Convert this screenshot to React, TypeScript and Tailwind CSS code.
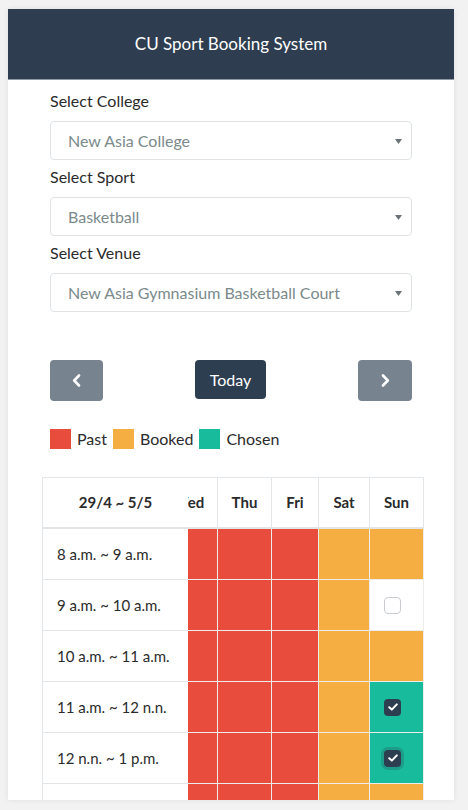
import React from "react";

// ---- Colours (Flatly-ish palette) ----
// past: red, booked: orange, chosen: teal, free: white

type Slot = "past" | "booked" | "free" | "chosen";

// Only the tail of the week is in view; Wed is half hidden behind the time column.
const DAYS: { name: string; width: string }[] = [
  { name: "Wed", width: "w-[58px]" },
  { name: "Thu", width: "w-[54px]" },
  { name: "Fri", width: "w-[47px]" },
  { name: "Sat", width: "w-[51px]" },
  { name: "Sun", width: "w-[54px]" },
];

const ROWS: { label: string; slots: Slot[]; focus?: boolean }[] = [
  { label: "8 a.m. ~ 9 a.m.", slots: ["past", "past", "past", "booked", "booked"] },
  { label: "9 a.m. ~ 10 a.m.", slots: ["past", "past", "past", "booked", "free"] },
  { label: "10 a.m. ~ 11 a.m.", slots: ["past", "past", "past", "booked", "booked"] },
  { label: "11 a.m. ~ 12 n.n.", slots: ["past", "past", "past", "booked", "chosen"] },
  { label: "12 n.n. ~ 1 p.m.", slots: ["past", "past", "past", "booked", "chosen"], focus: true },
  { label: "1 p.m. ~ 2 p.m.", slots: ["past", "past", "past", "booked", "booked"] },
];

const slotBg: Record<Slot, string> = {
  past: "bg-[#e74c3c]",
  booked: "bg-[#f5ae41]",
  free: "bg-white",
  chosen: "bg-[#18bc9c]",
};

function Select({ value }: { value: string }) {
  return (
    <div className="relative flex h-[39px] items-center rounded-[4px] border border-[#dfe3e6] bg-white pl-[17px] text-[16px] text-[#7b8a8b]">
      {value}
      <svg className="absolute right-[9px] top-[17px]" width="7" height="5" viewBox="0 0 7 5">
        <path d="M0 0 H7 L3.5 5 Z" fill="#6b7378" />
      </svg>
    </div>
  );
}

function Field({ label, value }: { label: string; value: string }) {
  return (
    <div className="mb-[6px]">
      <div className="mb-[9px] h-[22px] text-[16px] leading-[22px] text-[#2b2b2b]">{label}</div>
      <Select value={value} />
    </div>
  );
}

function Check({ checked, focus }: { checked: boolean; focus?: boolean }) {
  if (!checked) {
    return <div className="mr-[8px] h-[17px] w-[17px] rounded-[4px] border border-[#c9cdd1] bg-white" />;
  }
  return (
    <div
      className={
        "mr-[8px] flex h-[17px] w-[17px] items-center justify-center rounded-[4px] bg-[#2c3e50]" +
        (focus ? " shadow-[0_0_0_3px_rgba(44,62,80,0.25)]" : "")
      }
    >
      <svg width="10" height="8" viewBox="0 0 10 8">
        <path d="M1.2 4.2 L3.8 6.6 L8.8 1.4" fill="none" stroke="white" strokeWidth="2" strokeLinecap="round" strokeLinejoin="round" />
      </svg>
    </div>
  );
}

function Chevron({ dir }: { dir: "left" | "right" }) {
  return (
    <svg width="9" height="13" viewBox="0 0 9 13">
      <path
        d={dir === "left" ? "M7 1.5 L2.2 6.5 L7 11.5" : "M2 1.5 L6.8 6.5 L2 11.5"}
        fill="none"
        stroke="white"
        strokeWidth="2.6"
        strokeLinecap="round"
        strokeLinejoin="round"
      />
    </svg>
  );
}

function Legend({ color, label }: { color: string; label: string }) {
  return (
    <div className="mr-[6px] flex items-center">
      <div className={"mr-[6px] h-5 w-[21px] " + color} />
      <span className="text-[16px] leading-5 text-[#2b2b2b]">{label}</span>
    </div>
  );
}

function Timetable() {
  return (
    <div className="ml-[34px] flex w-[382px] border-l border-t border-[#e3e6e8]">
      {/* fixed time column */}
      <div className="w-[145px] shrink-0">
        <div className="flex h-[51px] items-center justify-center border-b-2 border-[#e3e6e8] text-[15px] font-bold text-[#2b2b2b]">
          29/4 ~ 5/5
        </div>
        {ROWS.map((row) => (
          <div key={row.label} className="flex h-[51px] items-center border-b border-[#e3e6e8] pl-[14px] text-[15px] text-[#2b2b2b]">
            {row.label}
          </div>
        ))}
      </div>

      {/* day columns, scrolled to the end of the week */}
      <div className="flex flex-1 justify-end overflow-hidden">
        <div className="shrink-0">
          <div className="flex">
            {DAYS.map((d) => (
              <div
                key={d.name}
                className={"flex h-[51px] shrink-0 items-center justify-center border-b-2 border-r border-[#e3e6e8] text-[15px] font-bold text-[#2b2b2b] " + d.width}
              >
                {d.name}
              </div>
            ))}
          </div>
          {ROWS.map((row) => (
            <div key={row.label} className="flex">
              {row.slots.map((s, i) => (
                <div
                  key={i}
                  className={"flex h-[51px] shrink-0 items-center justify-center border-b border-r border-[#ececec] " + DAYS[i].width + " " + slotBg[s]}
                >
                  {s === "free" && <Check checked={false} />}
                  {s === "chosen" && <Check checked focus={row.focus} />}
                </div>
              ))}
            </div>
          ))}
        </div>
      </div>
    </div>
  );
}

export default function App() {
  return (
    <div className="min-h-[810px] bg-[#f2f2f2] pl-[8px] pt-[9px] font-['Lato','Liberation_Sans',sans-serif]">
      <div className="h-[791px] w-[446px] overflow-hidden bg-white shadow-[0_0_6px_rgba(0,0,0,0.08)]">
        <div className="flex h-[71px] items-center justify-center border-b border-[#8e99a3] bg-[#2e3e50] text-[17px] text-white">
          CU Sport Booking System
        </div>

        <div className="px-[42px] pt-[10px]">
          <Field label="Select College" value="New Asia College" />
          <Field label="Select Sport" value="Basketball" />
          <Field label="Select Venue" value="New Asia Gymnasium Basketball Court" />

          <div className="mt-[48px] flex items-start justify-between">
            <button className="flex h-[41px] w-[53px] items-center justify-center rounded-[4px] bg-[#77838f]">
              <Chevron dir="left" />
            </button>
            <button className="h-[39px] w-[71px] rounded-[4px] bg-[#2c3e50] text-[16px] text-white">Today</button>
            <button className="flex h-[41px] w-[54px] items-center justify-center rounded-[4px] bg-[#77838f]">
              <Chevron dir="right" />
            </button>
          </div>

          <div className="mt-[28px] flex items-center">
            <Legend color="bg-[#e74c3c]" label="Past" />
            <Legend color="bg-[#f5ae41]" label="Booked" />
            <Legend color="bg-[#18bc9c]" label="Chosen" />
          </div>
        </div>

        <div className="mt-[28px]">
          <Timetable />
        </div>
      </div>
    </div>
  );
}
